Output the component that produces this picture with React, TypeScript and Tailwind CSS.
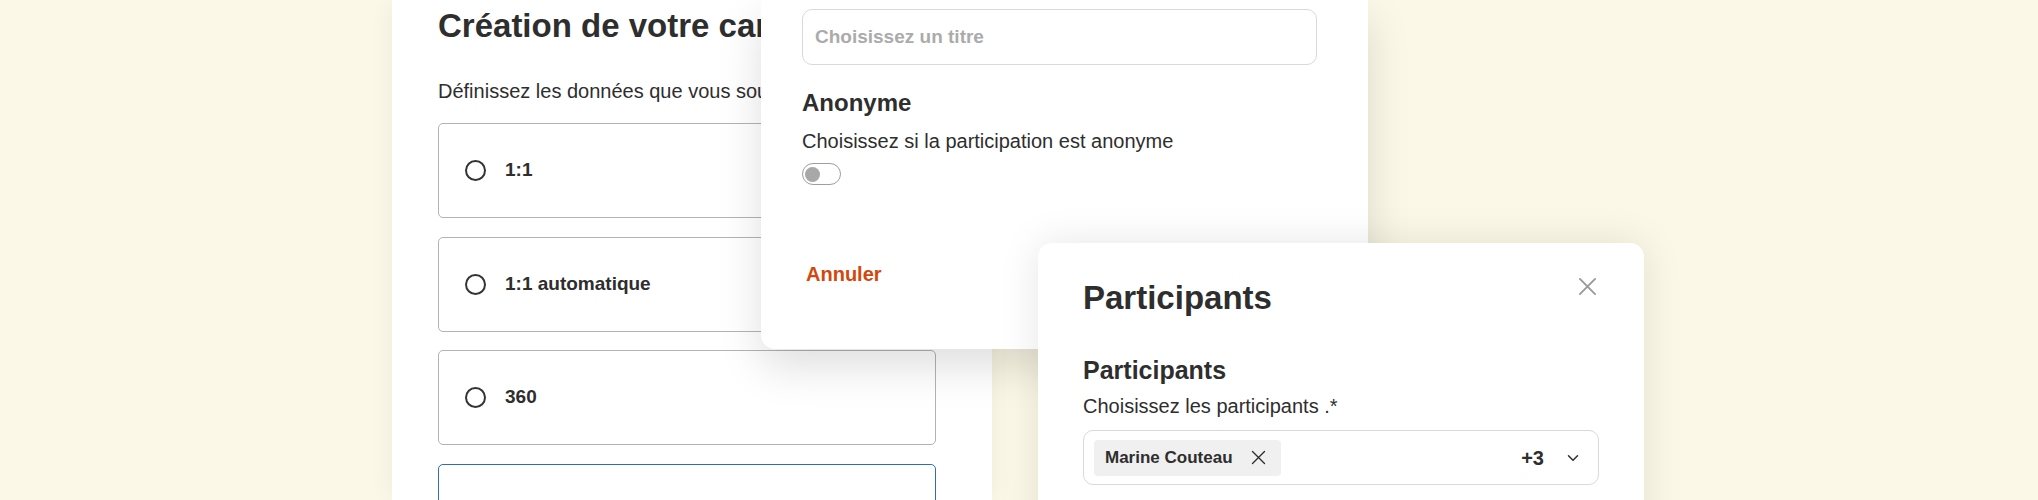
import { ChevronDown } from 'lucide-react';

const options = ['1:1', '1:1 automatique', '360', ''];

function Cross({ className }: { className?: string }) {
  return (
    <svg viewBox="0 0 20 20" className={className} fill="none" stroke="currentColor" strokeLinecap="round">
      <path d="M2 2 18 18M18 2 2 18" />
    </svg>
  );
}

export default function App() {
  return (
    <div className="relative w-[2038px] h-[500px] overflow-hidden bg-[#fcf8e7] font-['Liberation_Sans',Arial,sans-serif] text-[#2e2e2e]">
      {/* campagne (arrière-plan) */}
      <div className="absolute left-[392px] top-0 w-[600px] h-[500px] bg-white shadow-[0_0_24px_rgba(0,0,0,0.06)] pl-[46px] pt-[6px]">
        <h1 className="w-[323px] overflow-hidden text-[33px] leading-[40px] font-bold whitespace-nowrap">Création de votre campagne</h1>
        <p className="mt-[33px] w-[323px] overflow-hidden text-[20px] leading-[24px] whitespace-nowrap">Définissez les données que vous souhaitez collecter</p>
        <div className="mt-[20px] flex flex-col gap-[18.5px]">
          {options.map((o, i) => (
            <div
              key={i}
              className={`flex items-center h-[95px] w-[498px] shrink-0 rounded-[5px] border-[1.5px] pl-[26px] ${i === 3 ? 'border-[#2f6fad]' : 'border-[#b3b3b3]'}`}
            >
              <span className="w-[21px] h-[21px] rounded-full border-2 border-[#333]" />
              {o && <span className="ml-[19px] text-[19px] font-bold">{o}</span>}
            </div>
          ))}
        </div>
      </div>

      {/* modale titre / anonyme */}
      <div className="absolute left-[761px] top-0 z-10 w-[607px] h-[349px] bg-white rounded-b-[14px] shadow-[0_18px_44px_rgba(0,0,0,0.13)] pl-[41px] pt-[9px]">
        <div className="h-[56px] w-[515px] rounded-[10px] border border-[#d9d9d9] px-[12px] flex items-center text-[19px] font-bold text-[#ababab]">
          Choisissez un titre
        </div>
        <h2 className="mt-[22px] text-[24px] leading-[32px] font-bold">Anonyme</h2>
        <p className="mt-[10px] text-[20px] leading-[24px]">Choisissez si la participation est anonyme</p>
        <div className="mt-[10px] w-[39px] h-[22px] rounded-full border-[1.5px] border-[#9e9e9e] flex items-center px-[2px]">
          <span className="w-[15px] h-[15px] rounded-full bg-[#a8a8a8]" />
        </div>
        <button className="mt-[77px] ml-[4px] text-[20px] leading-[24px] font-bold text-[#d4470c]">Annuler</button>
      </div>

      {/* modale participants */}
      <div className="absolute left-[1038px] top-[243px] z-20 w-[606px] h-[320px] bg-white rounded-t-[14px] shadow-[0_0_40px_rgba(0,0,0,0.1)] pl-[45px] pr-[45px] pt-[35px]">
        <div className="flex items-start justify-between">
          <h2 className="text-[33px] leading-[40px] font-bold">Participants</h2>
          <Cross className="mt-[-1px] mr-[2px] w-[19px] h-[19px] text-[#9a9a9a] stroke-[2]" />
        </div>
        <h3 className="mt-[36px] text-[25px] leading-[32px] font-bold">Participants</h3>
        <p className="mt-[8px] text-[20px] leading-[24px]">Choisissez les participants .*</p>
        <div className="mt-[12px] h-[55px] rounded-[10px] border border-[#d9d9d9] flex items-center pl-[10px] pr-[16px]">
          <div className="h-[36px] rounded-[4px] bg-[#f0f0f0] flex items-center pl-[11px] pr-[15px] gap-[18px]">
            <span className="text-[17px] font-bold">Marine Couteau</span>
            <Cross className="w-[15px] h-[15px] text-[#2e2e2e] stroke-[1.8]" />
          </div>
          <span className="ml-auto text-[20px] font-bold">+3</span>
          <ChevronDown className="ml-[20px] w-[18px] h-[18px]" strokeWidth={2} />
        </div>
      </div>
    </div>
  );
}
